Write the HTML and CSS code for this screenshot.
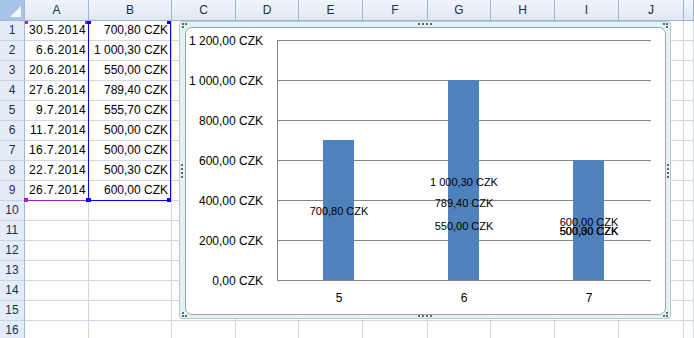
FILE: index.html
```html
<!DOCTYPE html>
<html lang="cs">
<head>
  <meta charset="UTF-8" />
  <title>List1</title>
  <link rel="stylesheet" href="styles.css">
</head>
<body>
<div class="sheet">

  <div class="row head">
    <b class="corner"></b><b>A</b><b>B</b><b>C</b><b>D</b><b>E</b><b>F</b><b>G</b><b>H</b><b>I</b><b>J</b><b></b>
  </div>

  <div class="row"><b>1</b><span>30.5.2014</span><span>700,80 CZK</span><span></span><span></span><span></span><span></span><span></span><span></span><span></span><span></span><span></span></div>
  <div class="row"><b>2</b><span>6.6.2014</span><span>1 000,30 CZK</span><span></span><span></span><span></span><span></span><span></span><span></span><span></span><span></span><span></span></div>
  <div class="row"><b>3</b><span>20.6.2014</span><span>550,00 CZK</span><span></span><span></span><span></span><span></span><span></span><span></span><span></span><span></span><span></span></div>
  <div class="row"><b>4</b><span>27.6.2014</span><span>789,40 CZK</span><span></span><span></span><span></span><span></span><span></span><span></span><span></span><span></span><span></span></div>
  <div class="row"><b>5</b><span>9.7.2014</span><span>555,70 CZK</span><span></span><span></span><span></span><span></span><span></span><span></span><span></span><span></span><span></span></div>
  <div class="row"><b>6</b><span>11.7.2014</span><span>500,00 CZK</span><span></span><span></span><span></span><span></span><span></span><span></span><span></span><span></span><span></span></div>
  <div class="row"><b>7</b><span>16.7.2014</span><span>500,00 CZK</span><span></span><span></span><span></span><span></span><span></span><span></span><span></span><span></span><span></span></div>
  <div class="row"><b>8</b><span>22.7.2014</span><span>500,30 CZK</span><span></span><span></span><span></span><span></span><span></span><span></span><span></span><span></span><span></span></div>
  <div class="row"><b>9</b><span>26.7.2014</span><span>600,00 CZK</span><span></span><span></span><span></span><span></span><span></span><span></span><span></span><span></span><span></span></div>
  <div class="row"><b>10</b><span></span><span></span><span></span><span></span><span></span><span></span><span></span><span></span><span></span><span></span><span></span></div>
  <div class="row"><b>11</b><span></span><span></span><span></span><span></span><span></span><span></span><span></span><span></span><span></span><span></span><span></span></div>
  <div class="row"><b>12</b><span></span><span></span><span></span><span></span><span></span><span></span><span></span><span></span><span></span><span></span><span></span></div>
  <div class="row"><b>13</b><span></span><span></span><span></span><span></span><span></span><span></span><span></span><span></span><span></span><span></span><span></span></div>
  <div class="row"><b>14</b><span></span><span></span><span></span><span></span><span></span><span></span><span></span><span></span><span></span><span></span><span></span></div>
  <div class="row"><b>15</b><span></span><span></span><span></span><span></span><span></span><span></span><span></span><span></span><span></span><span></span><span></span></div>
  <div class="row"><b>16</b><span></span><span></span><span></span><span></span><span></span><span></span><span></span><span></span><span></span><span></span><span></span></div>

  <!-- chart source ranges -->
  <div class="range-cat"></div>
  <div class="range-val"></div>
  <i class="handle purple h-cat-tl"></i>
  <i class="handle purple h-cat-tr"></i>
  <i class="handle purple h-cat-bl"></i>
  <i class="handle blue h-val-tl"></i>
  <i class="handle blue h-val-tr"></i>
  <i class="handle blue h-val-bl"></i>
  <i class="handle blue h-val-br"></i>

  <!-- embedded chart -->
  <div class="chart">
    <i class="grip g-tl"></i>
    <i class="grip g-tr"></i>
    <i class="grip g-bl"></i>
    <i class="grip g-br"></i>
    <i class="grip-h g-top"></i>
    <i class="grip-h g-bottom"></i>
    <i class="grip-v g-left"></i>
    <i class="grip-v g-right"></i>

    <div class="chart-area">
      <svg class="plot" width="479" height="286" viewBox="186 28 479 286">
        <g class="grid">
          <line x1="277" y1="40.5" x2="651" y2="40.5" />
          <line x1="277" y1="80.5" x2="651" y2="80.5" />
          <line x1="277" y1="120.5" x2="651" y2="120.5" />
          <line x1="277" y1="160.5" x2="651" y2="160.5" />
          <line x1="277" y1="200.5" x2="651" y2="200.5" />
          <line x1="277" y1="240.5" x2="651" y2="240.5" />
        </g>

        <g class="bars">
          <rect x="323" y="140" width="31" height="140" />
          <rect x="448" y="80" width="31" height="200" />
          <rect x="573" y="160" width="31" height="120" />
        </g>

        <g class="axis">
          <line x1="277.5" y1="40" x2="277.5" y2="281" />
          <line x1="277" y1="280.5" x2="651" y2="280.5" />
        </g>

        <g class="y-labels">
          <text x="263" y="45">1 200,00 CZK</text>
          <text x="263" y="85">1 000,00 CZK</text>
          <text x="263" y="125">800,00 CZK</text>
          <text x="263" y="165">600,00 CZK</text>
          <text x="263" y="205">400,00 CZK</text>
          <text x="263" y="245">200,00 CZK</text>
          <text x="263" y="285">0,00 CZK</text>
        </g>

        <g class="x-labels">
          <text x="339" y="302">5</text>
          <text x="464" y="302">6</text>
          <text x="589" y="302">7</text>
        </g>

        <g class="data-labels">
          <text x="339" y="215">700,80 CZK</text>
          <text x="464" y="186">1 000,30 CZK</text>
          <text x="464" y="207">789,40 CZK</text>
          <text x="464" y="230">550,00 CZK</text>
          <text x="589" y="226">600,00 CZK</text>
          <text x="589" y="235">500,30 CZK</text>
          <text x="589" y="235">500,00 CZK</text>
        </g>
      </svg>
    </div>
  </div>

</div>
</body>
</html>
```

FILE: styles.css
```css
* { margin: 0; padding: 0; box-sizing: border-box; }

html, body {
  height: 100%;
  overflow: hidden;
}

body {
  font-family: 'Liberation Sans', Arial, sans-serif;
  font-size: 12px;
  color: #000;
  background: #fff;
}

.sheet {
  position: relative;
  width: 694px;
  height: 338px;
}

/* grid rows: row header + columns A..K */
.row {
  display: grid;
  grid-template-columns: 25px 64px 83px 64px 63px 64px 65px 63px 64px 64px 65px 1fr;
  height: 20px;
}

.row > span {
  border-right: 1px solid #d0d7e5;
  border-bottom: 1px solid #d0d7e5;
  line-height: 19px;
  text-align: right;
  padding-right: 2px;
  white-space: nowrap;
}

/* dates column */
.row > span:nth-child(2) {
  letter-spacing: 0.4px;
}

.row > span:nth-child(3) {
  padding-right: 3px;
}

.row > b {
  font-weight: normal;
  text-align: center;
  line-height: 19px;
  color: #1b2f4d;
  background: #e4ecf7;
  border-right: 1px solid #9eb6ce;
  border-bottom: 1px solid #c5d3e3;
}

.row.head {
  height: 21px;
}

.row.head > b {
  line-height: 20px;
  background: linear-gradient(#f1f5fb, #dfe8f3);
  border-bottom: 1px solid #9eb6ce;
  border-right: 1px solid #9eb6ce;
}

.row.head > b.corner {
  position: relative;
  background: #a9c4e9;
  border-right: 1px solid #9eb6ce;
}

.row.head > b.corner::after {
  content: '';
  position: absolute;
  right: 3px;
  bottom: 3px;
  border-left: 11px solid transparent;
  border-bottom: 11px solid #f4f7fc;
}

/* highlighted source ranges of the chart */
.range-cat {
  position: absolute;
  left: 25px;
  top: 21px;
  width: 64px;
  height: 180px;
  border-bottom: 1px solid #a020c0;
}

.range-val {
  position: absolute;
  left: 88px;
  top: 21px;
  width: 83px;
  height: 180px;
  border: 1px solid #0000ff;
  border-top: none;
}

.handle {
  position: absolute;
  width: 4px;
  height: 4px;
}

.handle.purple { background: #a020c0; }
.handle.blue { background: #0000ff; }

.h-cat-tl { left: 25px; top: 21px; width: 3px; height: 3px; }
.h-cat-tr { left: 85px; top: 21px; width: 3px; height: 3px; }
.h-cat-bl { left: 24px; top: 198px; }
.h-val-tl { left: 87px; top: 21px; height: 3px; }
.h-val-tr { left: 167px; top: 21px; height: 3px; }
.h-val-bl { left: 86px; top: 198px; width: 5px; }
.h-val-br { left: 167px; top: 198px; }

/* chart object */
.chart {
  position: absolute;
  left: 179px;
  top: 21px;
  width: 492px;
  height: 298px;
  padding: 5px 5px 4px 5px;
  background: #e2f3f5;
  border: 1px solid #b9c9cc;
  border-radius: 3px;
}

.chart-area {
  width: 481px;
  height: 288px;
  background: #fff;
  border: 1px solid #a3a3a3;
  border-radius: 7px;
  overflow: hidden;
}

.plot {
  display: block;
}

.grid line { stroke: #868686; stroke-width: 1; }
.axis line { stroke: #868686; stroke-width: 1; }
.bars rect { fill: #4f81bd; }

.plot text {
  font-family: 'Liberation Sans', Arial, sans-serif;
  fill: #000;
}

.y-labels text { font-size: 12px; text-anchor: end; }
.x-labels text { font-size: 12px; text-anchor: middle; }
.data-labels text { font-size: 11px; text-anchor: middle; }

/* selection grips around the chart */
.grip {
  position: absolute;
  width: 2px;
  height: 2px;
  background: #5b6b6e;
}

.g-tl { left: 2px; top: 1px; box-shadow: 3px 0 #5b6b6e, 0 3px #5b6b6e; }
.g-tr { right: 5px; top: 1px; box-shadow: 3px 0 #5b6b6e, 3px 3px #5b6b6e; }
.g-bl { left: 2px; bottom: 4px; box-shadow: 0 3px #5b6b6e, 3px 3px #5b6b6e; }
.g-br { right: 2px; bottom: 4px; box-shadow: -3px 3px #5b6b6e, 0 3px #5b6b6e; }

.grip-h {
  position: absolute;
  left: 238px;
  width: 14px;
  height: 2px;
  background: repeating-linear-gradient(90deg, #5b6b6e 0 2px, transparent 2px 4px);
}

.g-top { top: 1px; }
.g-bottom { bottom: 1px; }

.grip-v {
  position: absolute;
  top: 142px;
  width: 2px;
  height: 14px;
  background: repeating-linear-gradient(180deg, #5b6b6e 0 2px, transparent 2px 4px);
}

.g-left { left: 1px; }
.g-right { right: 1px; }
```
